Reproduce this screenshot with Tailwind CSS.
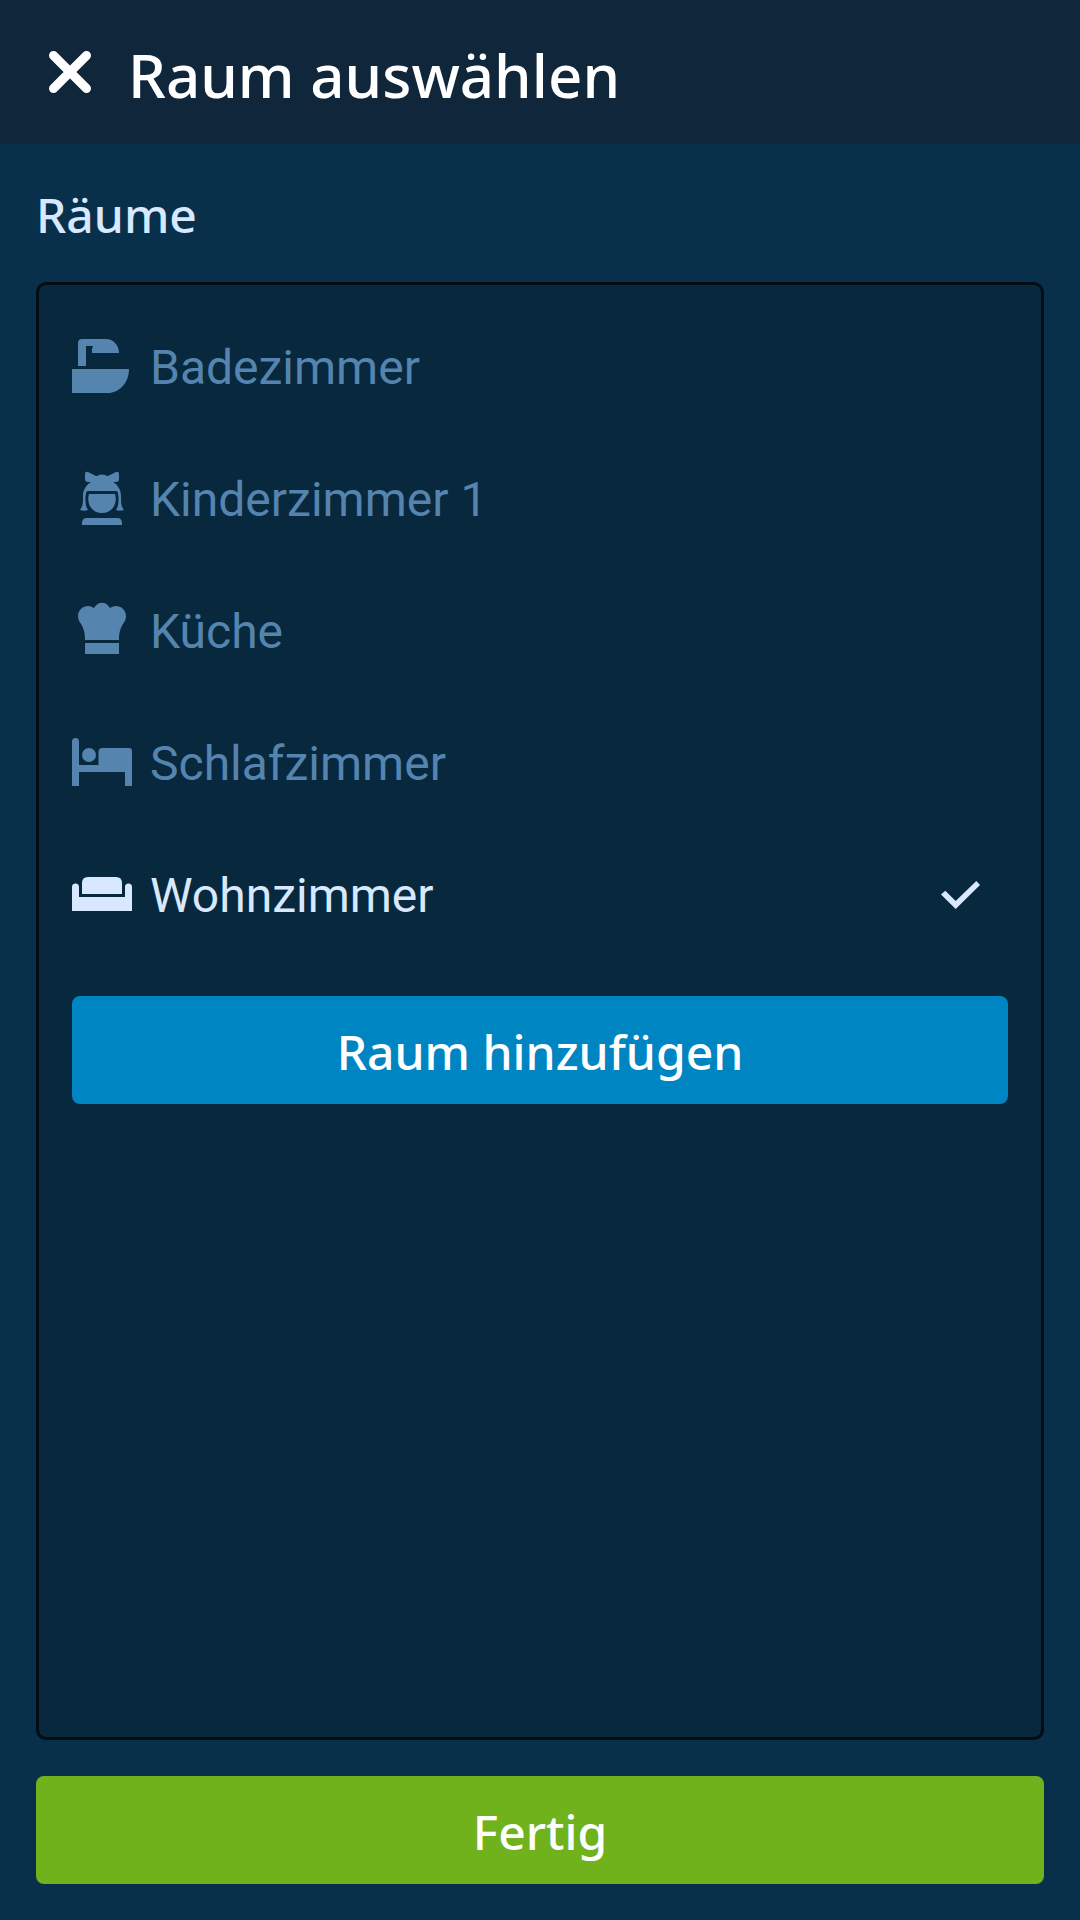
<!DOCTYPE html>
<html lang="de">
<head>
<meta charset="utf-8">
<meta name="viewport" content="width=device-width, initial-scale=1">
<title>Raum auswählen</title>
<script src="https://cdn.jsdelivr.net/npm/@tailwindcss/browser@4"></script>
</head>
<body class="flex min-h-screen flex-col bg-[#08304b] font-['Noto_Sans',sans-serif] font-medium text-white">
  <header class="flex h-36 shrink-0 items-center gap-9 bg-[#10263a] px-12">
    <button type="button" aria-label="Schließen" class="shrink-0">
      <svg class="size-11" viewBox="0 0 44 44" fill="none" stroke="currentColor" stroke-width="9" stroke-linecap="round" aria-hidden="true"><path d="M5.500 5.500L38.500 38.500M38.500 5.500L5.500 38.500"/></svg>
    </button>
    <h1 class="pt-1.5 text-[60px] leading-none">Raum auswählen</h1>
  </header>

  <main class="flex flex-1 flex-col px-9 pb-9">
    <h2 id="rooms" class="pt-10 pb-9 text-5xl leading-[62px] text-[#d7e8ff]">Räume</h2>

    <section class="mb-9 flex-1 rounded-[10px] border-3 border-[#030c14] bg-[#08283e] px-[33px] py-4">
      <div role="radiogroup" aria-labelledby="rooms" class="mb-[35px] font-['Roboto',sans-serif] text-5xl font-normal">
        <label class="flex h-33 items-center text-[#5584af] has-[:checked]:text-[#d7e8ff]">
          <input type="radio" name="room" class="peer sr-only">
          <svg class="mr-[18px] size-15 shrink-0" viewBox="0 0 60 60" fill="currentColor" aria-hidden="true"><path d="M0 32H57C57 46 47 56 36 56H0ZM6 29V6Q6 2 10 2H34C41 2 47 8 47 16H20V12C20 11 21 10 21 9H14V29Z"/></svg>
          <span class="flex-1 pt-0.5">Badezimmer</span>
        </label>
        <label class="flex h-33 items-center text-[#5584af] has-[:checked]:text-[#d7e8ff]">
          <input type="radio" name="room" class="peer sr-only">
          <svg class="mr-[18px] size-15 shrink-0" viewBox="0 0 60 60" fill="currentColor" aria-hidden="true"><path d="M13 5Q13 2 16 3L24 7Q26 7 27 6Q30 5 33 6Q34 7 36 7L44 3Q47 2 47 5V10Q47 13 44 13L41 13C46 16 49 21 49 27C49 34 49 37 52 41C49 42 46 42 44 41C47 37 47 29 46 25Q46 22 44 22H16Q14 22 14 25C13 29 13 37 16 41C14 42 11 42 8 41C11 37 11 34 11 27C11 21 14 16 19 13L16 13Q13 13 13 10ZM17 25H43C46 35 40 44 30 44S14 35 17 25ZM10 56V54Q10 49 15 49H45Q50 49 50 54V56Z"/></svg>
          <span class="flex-1 pt-0.5">Kinderzimmer 1</span>
        </label>
        <label class="flex h-33 items-center text-[#5584af] has-[:checked]:text-[#d7e8ff]">
          <input type="radio" name="room" class="peer sr-only">
          <svg class="mr-[18px] size-15 shrink-0" viewBox="0 0 60 60" fill="currentColor" aria-hidden="true"><path d="M13 39C13 32 12 28 9 23C7 20 6 18 6 15C6 9 11 5 16 5Q19 5 22 7C26 0 34 0 38 7Q41 5 44 5C49 5 54 9 54 15C54 18 53 20 51 23C48 28 47 32 47 39ZM13 42H47V53H13Z"/></svg>
          <span class="flex-1 pt-0.5">Küche</span>
        </label>
        <label class="flex h-33 items-center text-[#5584af] has-[:checked]:text-[#d7e8ff]">
          <input type="radio" name="room" class="peer sr-only">
          <svg class="mr-[18px] size-15 shrink-0" viewBox="0 0 60 60" fill="currentColor" aria-hidden="true"><path d="M0 53V8.500A3.500 3.500 0 0 1 7 8.500V32H26.500V19Q26.500 15 30.500 15H57Q60 15 60 18V53H53V39H7V53Z"/><circle cx="17" cy="22" r="7"/></svg>
          <span class="flex-1 pt-0.5">Schlafzimmer</span>
        </label>
        <label class="flex h-33 items-center text-[#5584af] has-[:checked]:text-[#d7e8ff]">
          <input type="radio" name="room" class="peer sr-only" checked>
          <svg class="mr-[18px] size-15 shrink-0" viewBox="0 0 60 60" fill="currentColor" aria-hidden="true"><path d="M0 46V22A3.500 3.500 0 0 1 7 22V32H53V22A3.500 3.500 0 0 1 60 22V46ZM10 29V18Q10 12 16 12H44Q50 12 50 18V29Z"/></svg>
          <span class="flex-1 pt-0.5">Wohnzimmer</span>
          <svg class="mr-7 h-[30px] w-10 shrink-0" viewBox="0 0 40 30" fill="currentColor" aria-hidden="true"><path d="M1 14.500L5.300 10.700L15.700 21L36.300 1L40 5L15.700 29Z"/></svg>
        </label>
      </div>
      <button type="button" class="h-27 w-full rounded-lg bg-[#0085c3] pt-1 text-5xl">Raum hinzufügen</button>
    </section>

    <button type="button" class="h-27 w-full shrink-0 rounded-lg bg-[#70b21c] pt-1 text-5xl">Fertig</button>
  </main>
</body>
</html>
